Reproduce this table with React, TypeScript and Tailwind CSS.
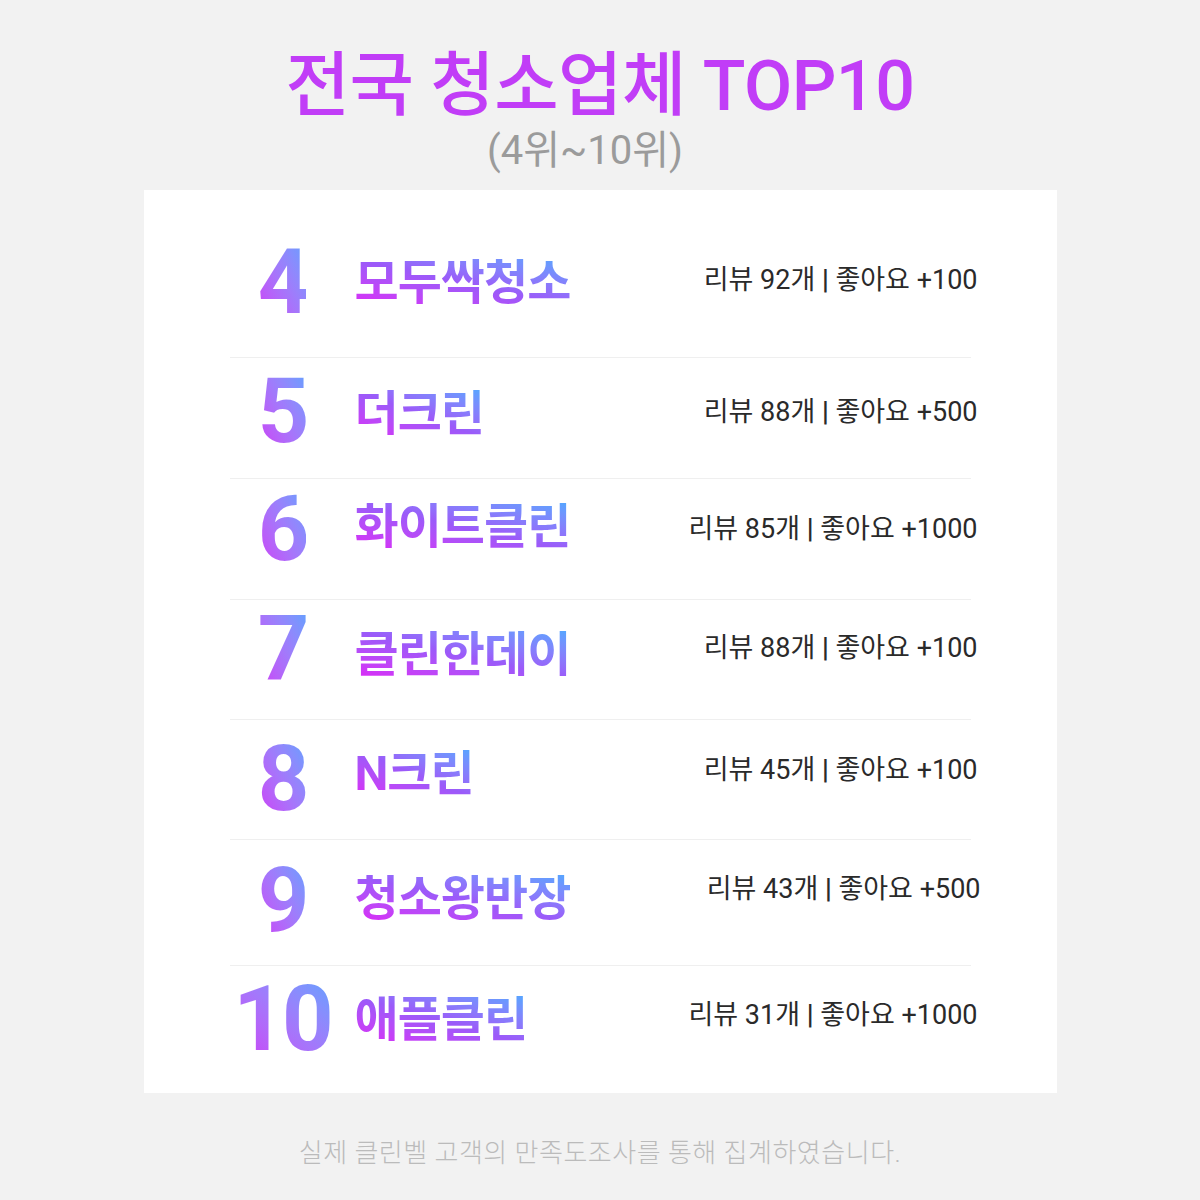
import React from "react";

type Rank = {
  rank: string;
  name: string;
  reviews: number;
  likes: number;
  row: string;
  nameShift: string;
  statShift: string;
};

const ranks: Rank[] = [
  { rank: "4", name: "모두싹청소", reviews: 92, likes: 100, row: "h-[168px] pt-[19px] border-b", nameShift: "", statShift: "-translate-y-[3px]" },
  { rank: "5", name: "더크린", reviews: 88, likes: 500, row: "h-[121px] pb-[12px] border-b", nameShift: "translate-y-[2px]", statShift: "" },
  { rank: "6", name: "화이트클린", reviews: 85, likes: 1000, row: "h-[121px] pb-[18px] border-b", nameShift: "-translate-y-[3px]", statShift: "-translate-y-[1px]" },
  { rank: "7", name: "클린한데이", reviews: 88, likes: 100, row: "h-[120px] pb-[19px] border-b", nameShift: "translate-y-[5px]", statShift: "-translate-y-[2px]" },
  { rank: "8", name: "N크린", reviews: 45, likes: 100, row: "h-[120px] pt-[1px] border-b", nameShift: "-translate-y-[6px]", statShift: "-translate-y-[10px]" },
  { rank: "9", name: "청소왕반장", reviews: 43, likes: 500, row: "h-[126px] pb-[3px] border-b", nameShift: "-translate-y-[2px]", statShift: "-translate-y-[12px] translate-x-[3px]" },
  { rank: "10", name: "애플클린", reviews: 31, likes: 1000, row: "h-[127px] pb-[19px]", nameShift: "", statShift: "-translate-y-[5px]" },
];

const RankRow = ({ item }: { item: Rank }) => {
  return (
    <div className={`mx-[86px] flex items-center border-[#efefef] ${item.row}`}>
      <div className="w-[105px] shrink-0 text-center">
        <span className="inline-block bg-linear-to-tr from-[#cf2cf6] to-[#5aa2ff] bg-clip-text text-[90px] font-bold leading-none tracking-[-3px] text-transparent font-['Roboto',sans-serif]">
          {item.rank}
        </span>
      </div>
      <div className={`ml-[20px] ${item.nameShift}`}>
        <span className="inline-block bg-linear-to-tr from-[#dc22f6] via-[#9b5af9] to-[#52a6ff] bg-clip-text text-[48px] font-bold leading-none tracking-[-1px] text-transparent font-['Roboto','Noto_Sans_CJK_KR',sans-serif]">
          {item.name}
        </span>
      </div>
      <div className={`ml-auto -mr-[7px] text-right text-[27px] font-normal leading-none text-[#2a2a2a] font-['Roboto','Noto_Sans_CJK_KR',sans-serif] ${item.statShift}`}>
        리뷰 {item.reviews}개 <span className="font-bold">|</span> 좋아요 +{item.likes}
      </div>
    </div>
  );
};

export default function App() {
  return (
    <div className="flex min-h-[1200px] w-full flex-col items-center bg-[#f2f2f2] font-['Roboto','Noto_Sans_CJK_KR',sans-serif]">
      {/* heading */}
      <h1 className="pt-[51px] text-[70px] font-medium leading-none tracking-[-0.5px] text-[#c13df7]">
        전국 청소업체 TOP10
      </h1>
      <p className="pt-[10px] pr-[30px] text-[40px] font-normal leading-none text-[#9b9b9b]">
        (4위~10위)
      </p>

      {/* list card */}
      <div className="mt-[19px] w-[913px] bg-white">
        {ranks.map((item) => (
          <RankRow key={item.rank} item={item} />
        ))}
      </div>

      <p className="pt-[47px] text-[26px] font-light leading-none tracking-[0.5px] text-[#bbbbbb]">
        실제 클린벨 고객의 만족도조사를 통해 집계하였습니다.
      </p>
    </div>
  );
}
